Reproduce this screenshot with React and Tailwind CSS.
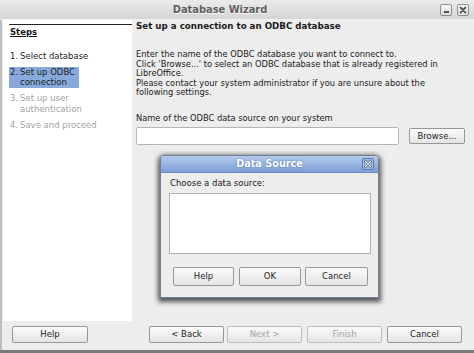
import React from "react";

function Btn({ children, className = "", disabled = false }) {
  return (
    <div
      className={
        "flex items-center justify-center rounded-[2px] border bg-gradient-to-b from-[#fbfbfb] to-[#e4e4e4] text-[8.5px] leading-none " +
        (disabled ? "border-[#bdbdbd] text-[#a6a6a6] " : "border-[#979797] text-[#1e1e1e] ") +
        className
      }
    >
      {children}
    </div>
  );
}

function Step({ n, lines, active = false, disabled = false }) {
  return (
    <div
      className={
        "flex w-fit pl-[1px] pr-[4px] leading-[10.4px] " +
        (active ? "bg-[#87a9db] " : "") +
        (disabled ? "text-[#a3a3a3] " : "text-[#1e1e1e] ")
      }
    >
      <div className="w-[10px] shrink-0">{n}.</div>
      <div>
        {lines.map((l) => (
          <div key={l}>{l}</div>
        ))}
      </div>
    </div>
  );
}

export default function App() {
  return (
    <div className="relative flex h-[353px] w-[474px] flex-col overflow-hidden bg-[#ededed] font-['DejaVu_Sans',sans-serif] text-[#1a1a1a]">
      {/* Title bar */}
      <div className="flex h-[20px] items-center border-b border-[#f2f2f2] bg-gradient-to-b from-[#ebebeb] to-[#d5d5d5]">
        <div className="flex-1 text-center text-[9.9px] font-bold leading-none text-[#5f5f5f] [text-shadow:0_1px_0_#f8f8f8]">
          Database Wizard
        </div>
        <div className="flex gap-[5px] pr-[5px]">
          <div className="relative h-[12px] w-[12px] rounded-[2px] border border-[#8e8e8e] bg-gradient-to-b from-[#f7f7f7] to-[#dedede]">
            <div className="absolute bottom-[2px] left-[3px] h-[2px] w-[5px] bg-[#555]" />
          </div>
          <div className="flex h-[12px] w-[12px] items-center justify-center rounded-[2px] border border-[#8e8e8e] bg-gradient-to-b from-[#f7f7f7] to-[#dedede]">
            <svg width="8" height="8" viewBox="0 0 8 8">
              <path d="M1.5 1.5 L6.5 6.5 M6.5 1.5 L1.5 6.5" stroke="#555" strokeWidth="1.8" strokeLinecap="round" />
            </svg>
          </div>
        </div>
      </div>

      {/* Body */}
      <div className="flex h-[301px] border-l-[2px] border-[#bdbdbd]">
        <aside className="ml-[1px] w-[129px] bg-white pl-[6px] pt-[4px] text-[8.5px]">
          <div className="h-px bg-[#222]" />
          <div className="mt-[2px] pl-[1px] font-bold leading-[11px] underline underline-offset-[1px]">Steps</div>
          <div className="mt-[12.5px] flex flex-col gap-[5.8px]">
            <Step n="1" lines={["Select database"]} />
            <Step n="2" lines={["Set up ODBC", "connection"]} active />
            <Step n="3" lines={["Set up user", "authentication"]} disabled />
            <Step n="4" lines={["Save and proceed"]} disabled />
          </div>
        </aside>

        <main className="flex-1 pl-[4px] pr-[9px]">
          <div className="text-[8.7px] font-bold leading-[12px]">Set up a connection to an ODBC database</div>
          <div className="mt-[18px] text-[8.3px] leading-[9.6px]">
            <div>Enter the name of the ODBC database you want to connect to.</div>
            <div>Click 'Browse...' to select an ODBC database that is already registered in</div>
            <div>LibreOffice.</div>
            <div>Please contact your system administrator if you are unsure about the</div>
            <div>following settings.</div>
          </div>
          <div className="mt-[15.7px] text-[8.3px] leading-[9.6px]">Name of the ODBC data source on your system</div>
          <div className="mt-[3.5px] flex items-center">
            <div className="h-[18px] w-[263px] rounded-[2px] border border-[#b5b5b5] bg-white" />
            <Btn className="ml-[10px] h-[16px] w-[56px]">Browse...</Btn>
          </div>
        </main>
      </div>

      {/* Footer */}
      <div className="flex h-[29px] items-start border-l-[2px] border-[#bdbdbd] pl-[10px] pt-[5px]">
        <Btn className="h-[17px] w-[76px]">Help</Btn>
        <Btn className="ml-[61px] h-[17px] w-[75px]">&lt; Back</Btn>
        <Btn className="ml-[3px] h-[17px] w-[75px]" disabled>Next &gt;</Btn>
        <Btn className="ml-[5px] h-[17px] w-[75px]" disabled>Finish</Btn>
        <Btn className="ml-[5px] h-[17px] w-[75px]">Cancel</Btn>
      </div>
      <div className="h-[3px] bg-[#7b7b7b]" />

      {/* Data Source dialog */}
      <div className="absolute left-[160px] top-[155px] flex h-[143px] w-[219px] flex-col rounded-t-[4px] border border-[#6f7f96] bg-[#ededed] shadow-[0_2px_5px_2px_rgba(0,0,0,0.65)]">
        <div className="relative flex h-[17px] items-center justify-center rounded-t-[3px] border-b border-[#6d8cc0] bg-gradient-to-b from-[#b4cbed] to-[#7c9fd6]">
          <span className="text-[9.7px] font-bold leading-none text-white [text-shadow:0_0_2px_#4a6aa0]">Data Source</span>
          <div className="absolute right-[4px] top-[2px] flex h-[12px] w-[12px] items-center justify-center rounded-[2px] border border-[#5c7aad] bg-[#9db8e2]">
            <svg width="8" height="8" viewBox="0 0 8 8">
              <path d="M1.5 1.5 L6.5 6.5 M6.5 1.5 L1.5 6.5" stroke="#3d5a8a" strokeWidth="2.6" strokeLinecap="round" />
              <path d="M1.5 1.5 L6.5 6.5 M6.5 1.5 L1.5 6.5" stroke="#fff" strokeWidth="1.2" strokeLinecap="round" />
            </svg>
          </div>
        </div>
        <div className="pl-[8px] pr-[8px] pt-[5px]">
          <div className="pl-[1px] text-[8.5px] leading-[11px]">Choose a data source:</div>
          <div className="mt-[4px] h-[61px] w-[202px] border border-[#b3b3b3] bg-white" />
          <div className="mt-[13px] flex pl-[4px]">
            <Btn className="h-[19px] w-[61px]">Help</Btn>
            <Btn className="ml-[5px] h-[19px] w-[62px]">OK</Btn>
            <Btn className="ml-[4px] h-[19px] w-[63px]">Cancel</Btn>
          </div>
        </div>
      </div>
    </div>
  );
}
